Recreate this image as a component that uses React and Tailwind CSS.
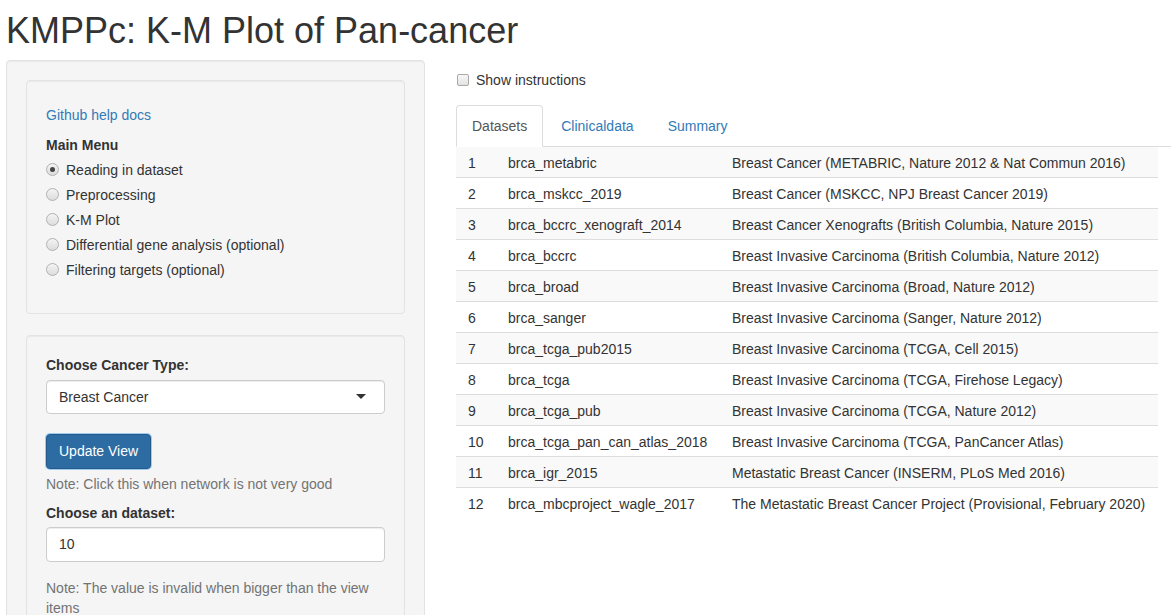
import React from 'react';

const rows = [
  ['1', 'brca_metabric', 'Breast Cancer (METABRIC, Nature 2012 & Nat Commun 2016)'],
  ['2', 'brca_mskcc_2019', 'Breast Cancer (MSKCC, NPJ Breast Cancer 2019)'],
  ['3', 'brca_bccrc_xenograft_2014', 'Breast Cancer Xenografts (British Columbia, Nature 2015)'],
  ['4', 'brca_bccrc', 'Breast Invasive Carcinoma (British Columbia, Nature 2012)'],
  ['5', 'brca_broad', 'Breast Invasive Carcinoma (Broad, Nature 2012)'],
  ['6', 'brca_sanger', 'Breast Invasive Carcinoma (Sanger, Nature 2012)'],
  ['7', 'brca_tcga_pub2015', 'Breast Invasive Carcinoma (TCGA, Cell 2015)'],
  ['8', 'brca_tcga', 'Breast Invasive Carcinoma (TCGA, Firehose Legacy)'],
  ['9', 'brca_tcga_pub', 'Breast Invasive Carcinoma (TCGA, Nature 2012)'],
  ['10', 'brca_tcga_pan_can_atlas_2018', 'Breast Invasive Carcinoma (TCGA, PanCancer Atlas)'],
  ['11', 'brca_igr_2015', 'Metastatic Breast Cancer (INSERM, PLoS Med 2016)'],
  ['12', 'brca_mbcproject_wagle_2017', 'The Metastatic Breast Cancer Project (Provisional, February 2020)'],
];

const menu = [
  'Reading in dataset',
  'Preprocessing',
  'K-M Plot',
  'Differential gene analysis (optional)',
  'Filtering targets (optional)',
];

const Radio = ({ checked, label }) => (
  <label className="flex items-center h-[20px]">
    <span className="w-[13px] h-[13px] rounded-full border border-[#b1b1b1] bg-gradient-to-b from-[#f4f4f4] to-[#dcdcdc] flex items-center justify-center">
      {checked && <span className="w-[5px] h-[5px] rounded-full bg-[#444]" />}
    </span>
    <span className="ml-[7px]">{label}</span>
  </label>
);

const App = () => {
  return (
    <div className="w-[1171px] h-[615px] overflow-hidden bg-white text-[#333] text-[14px] leading-[20px] [font-family:'Liberation_Sans',Arial,sans-serif]">
      <h2 className="pl-[6px] mt-[11px] mb-[9px] text-[36px] leading-[1.1] font-normal">
        KMPPc: K-M Plot of Pan-cancer
      </h2>

      <div className="flex pl-[6px]">
        {/* Sidebar */}
        <div className="w-[419px] shrink-0 bg-[#f5f5f5] border border-[#e3e3e3] rounded-[4px] p-[19px] pb-[40px] shadow-[inset_0_1px_1px_rgba(0,0,0,0.05)]">
          <div className="bg-[#f5f5f5] border border-[#e3e3e3] rounded-[4px] px-[19px] pt-[24px] pb-[19px] shadow-[inset_0_1px_1px_rgba(0,0,0,0.05)]">
            <a className="text-[#337ab7] block">Github help docs</a>
            <div className="mt-[10px] font-bold">Main Menu</div>
            <div className="mt-[5px] mb-[14px] flex flex-col gap-[5px]">
              {menu.map((m, i) => (
                <Radio key={m} label={m} checked={i === 0} />
              ))}
            </div>
          </div>

          <div className="mt-[21px] bg-[#f5f5f5] border border-[#e3e3e3] rounded-[4px] px-[19px] pt-[19px] pb-[19px] shadow-[inset_0_1px_1px_rgba(0,0,0,0.05)]">
            <div className="font-bold">Choose Cancer Type:</div>
            <div className="mt-[5px] h-[34px] bg-white border border-[#ccc] rounded-[4px] flex items-center justify-between pl-[12px] pr-[18px] shadow-[inset_0_1px_1px_rgba(0,0,0,0.075)]">
              <span>Breast Cancer</span>
              <span className="w-0 h-0 border-l-[5px] border-r-[5px] border-t-[5px] border-l-transparent border-r-transparent border-t-[#333]" />
            </div>
            <button className="mt-[20px] h-[35px] px-[12px] bg-[#2d6ca2] border border-[#25598a] rounded-[4px] text-white shadow-[0_0_0_1px_rgba(102,175,233,0.6)]">
              Update View
            </button>
            <div className="mt-[5px] text-[#737373]">Note: Click this when network is not very good</div>
            <div className="mt-[9px] font-bold">Choose an dataset:</div>
            <div className="mt-[4px] h-[35px] bg-white border border-[#ccc] rounded-[4px] flex items-center pl-[12px] shadow-[inset_0_1px_1px_rgba(0,0,0,0.075)]">
              10
            </div>
            <div className="mt-[16px] text-[#737373]">
              Note: The value is invalid when bigger than the view items
            </div>
          </div>
        </div>

        {/* Main panel */}
        <div className="flex-1 pl-[31px] pt-[10px]">
          <label className="flex items-center h-[20px]">
            <span className="ml-[1px] w-[12px] h-[12px] rounded-[2px] border border-[#a9a9a9] bg-gradient-to-b from-[#f7f7f7] to-[#e3e3e3]" />
            <span className="ml-[7px]">Show instructions</span>
          </label>

          <div className="mt-[15px] flex border-b border-[#ddd]">
            <div className="-mb-px mr-[2px] px-[15px] py-[10px] bg-white border border-[#ddd] border-b-white rounded-t-[4px] text-[#555]">
              Datasets
            </div>
            <div className="-mb-px mr-[2px] px-[15px] py-[10px] border border-transparent text-[#337ab7]">
              Clinicaldata
            </div>
            <div className="-mb-px mr-[2px] px-[15px] py-[10px] border border-transparent text-[#337ab7]">
              Summary
            </div>
          </div>

          <div className="w-[702px]">
            {rows.map((r, i) => (
              <div
                key={r[0]}
                className={`grid grid-cols-[40px_224px_1fr] ${i > 0 ? 'border-t border-[#ddd]' : ''} ${i % 2 === 0 ? 'bg-[#f9f9f9]' : 'bg-white'}`}
              >
                <div className="pl-[12px] pt-[6px] pb-[4px]">{r[0]}</div>
                <div className="pl-[12px] pt-[6px] pb-[4px] whitespace-nowrap">{r[1]}</div>
                <div className="pl-[12px] pt-[6px] pb-[4px] whitespace-nowrap">{r[2]}</div>
              </div>
            ))}
          </div>
        </div>
      </div>
    </div>
  );
};

export default App;
